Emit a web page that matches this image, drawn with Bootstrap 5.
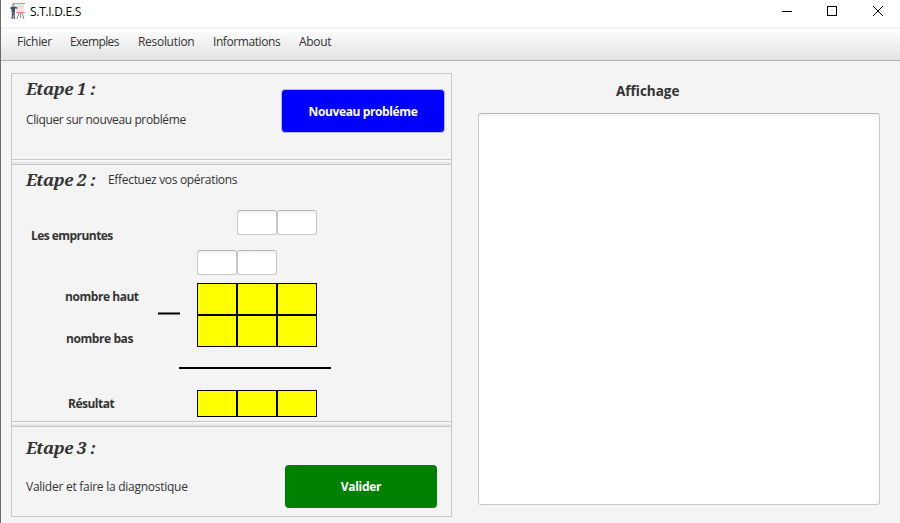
<!DOCTYPE html>
<html lang="fr">
<head>
<meta charset="utf-8">
<title>S.T.I.D.E.S</title>
<link href="https://cdn.jsdelivr.net/npm/bootstrap@5.3.0/dist/css/bootstrap.min.css" rel="stylesheet">
<style>
body{width:900px;height:523px;background:#f4f4f4;color:#333;font:12px/16px "Open Sans","Noto Sans",sans-serif;border-left:1px solid #6b6b6b}
.titlebar{height:27px;background:#fff;color:#000}
.app-icon{width:16px;height:20px;margin-left:8px}
.title-text{font-size:12px;letter-spacing:-.3px;margin-left:5px;line-height:24px;height:24px}
.winbtns{width:138px;height:24px}
.winbtns svg{width:46px;height:24px}
.menubar{height:34px;border-top:2px solid #f4f4f4;border-bottom:1px solid #b1b1b1;background:linear-gradient(#fdfdfd,#e3e3e3);padding:3px 0 0 16px;gap:18px}
.menubar a{color:#333;text-decoration:none;line-height:20px;height:20px;letter-spacing:-.3px}
.menubar .m1{width:35px;letter-spacing:-.3px}.menubar .m2{width:50px;letter-spacing:-.6px}.m3{width:57px}.menubar .m4{width:68px;letter-spacing:-.42px}
.workspace{padding:12px 20px 0 10px;gap:26px}
.steps{width:441px;height:444px;border:1px solid #c8c8c8}
.divider{height:6px;border:solid #c8c8c8;border-width:1px 0;background:linear-gradient(#fcfcfc,#dedede)}
.step1{height:85px;padding:5px 6px 0 14px}
.step2{height:256px}
.step2-head{height:30px;padding:5px 0 0 14px}
.step3{height:90px;padding:0 14px}
.step3-text{padding-top:11px}
h2.step-title{font:italic bold 17px/20px "Noto Serif","DejaVu Serif Condensed","DejaVu Serif",serif;letter-spacing:-.4px;width:82px;white-space:nowrap;margin:0;color:#333}
.t{white-space:nowrap}
.t1{letter-spacing:-.38px;padding-top:13px}
.t2{letter-spacing:-.32px;padding-top:2px}
.t3{letter-spacing:-.26px;padding-top:21px}
.cmd{border-radius:4px;color:#fff;font-weight:700;font-size:12px;padding:0;letter-spacing:-.38px}
.cmd-new{width:164px;height:44px;background:#00f;border:1px solid #b4b4f4;margin-top:10px;padding-top:2px}
.cmd-ok{width:152px;height:43px;background:#008000;border:0;margin-top:38px;letter-spacing:-.28px}
.labels{width:146px}
.lb-borrow{padding:33px 0 0 19px;letter-spacing:-.55px}
.lb-top{padding:45px 0 0 53px;letter-spacing:-.45px}
.lb-bottom{padding:26px 0 0 54px;letter-spacing:-.42px}
.lb-result{padding:49px 0 0 56px;letter-spacing:-.5px}
.ops{margin-left:17px;width:134px}
.borrow-high{padding:15px 0 0 40px}
.borrow-low{padding:15px 0 8px}
.minus{width:22px;height:3px;border:solid #797979;border-width:1px 0;background:#000;margin-top:117px}
.cellbox{width:40px;height:32px;background:#ff0;border:1px solid #000}
.res .cellbox{height:27px}
.borrow{width:40px;height:25px;border:1px solid #c8c8c8;border-top-color:#b5b5b5;border-radius:3px;background:linear-gradient(#f2f2f2,#fff 5px);padding:0}
.rule{width:152px;height:2px;background:#000;margin:20px 0 21px -18px}
.show-title{font-weight:700;font-size:13.5px;line-height:18px;height:31px;padding:9px 0 0 138px}
.display-area{width:402px;height:392px;border:1px solid #c8c8c8;border-top-color:#b5b5b5;border-radius:3px;background:linear-gradient(#f2f2f2,#fff 5px);resize:none;display:block;margin-top:9px}
</style>
<script src="https://cdn.jsdelivr.net/npm/bootstrap@5.3.0/dist/js/bootstrap.bundle.min.js"></script>
</head>
<body class="overflow-hidden">
<header class="titlebar d-flex">
  <svg class="app-icon" viewBox="0 0 16 20">
    <path d="M7 4h8v8H7z" fill="#eee4e1"/><path d="M5.500 3.500H16M7 12.500h9" stroke="#dc9086" fill="none"/>
    <path d="M10 13l-2 6M11.500 13v5M13 13l2 6" stroke="#8a8a8a" fill="none"/>
    <circle cx="4.300" cy="4.500" r="1.500" fill="#c0a088"/>
    <path d="M2.500 6.500h3.500l2.500 1v1.300l-2.500-.3V12H2.500V9.500L1 8z" fill="#3f5569"/>
    <path d="M2.800 12h3l.2 7H4.700l-.4-5-.5 5H2.500z" fill="#59636b"/>
  </svg>
  <div class="title-text">S.T.I.D.E.S</div>
  <div class="winbtns d-flex ms-auto">
    <svg viewBox="0 0 46 24"><path d="M20 11.500h10" stroke="#000" shape-rendering="crispEdges"/></svg>
    <svg viewBox="0 0 46 24"><path d="M19.500 6.500h9v9h-9z" stroke="#000" fill="none" shape-rendering="crispEdges"/></svg>
    <svg viewBox="0 0 46 24"><path d="M19 6l10 10M29 6L19 16" stroke="#000"/></svg>
  </div>
</header>
<nav class="menubar d-flex">
  <a class="m1" href="#">Fichier</a><a class="m2" href="#">Exemples</a><a class="m3" href="#">Resolution</a><a class="m4" href="#">Informations</a><a href="#">About</a>
</nav>
<main class="workspace d-flex">
  <div class="steps">
    <section class="step1 d-flex justify-content-between">
      <div><h2 class="step-title">Etape 1 :</h2><div class="t t1">Cliquer sur nouveau probléme</div></div>
      <button class="btn cmd cmd-new">Nouveau probléme</button>
    </section>
    <div class="divider"></div>
    <section class="step2">
      <div class="step2-head d-flex"><h2 class="step-title">Etape 2 :</h2><span class="t t2">Effectuez vos opérations</span></div>
      <div class="d-flex fw-bold">
        <div class="labels">
          <div class="t lb-borrow">Les empruntes</div>
          <div class="t lb-top">nombre haut</div>
          <div class="t lb-bottom">nombre bas</div>
          <div class="t lb-result">Résultat</div>
        </div>
        <div class="minus"></div>
        <div class="ops">
          <div class="d-flex borrow-high"><input class="borrow"><input class="borrow"></div>
          <div class="d-flex borrow-low"><input class="borrow"><input class="borrow"></div>
          <div class="d-flex"><div class="cellbox"></div><div class="cellbox"></div><div class="cellbox"></div></div>
          <div class="d-flex"><div class="cellbox"></div><div class="cellbox"></div><div class="cellbox"></div></div>
          <div class="rule"></div>
          <div class="d-flex res"><div class="cellbox"></div><div class="cellbox"></div><div class="cellbox"></div></div>
        </div>
      </div>
    </section>
    <div class="divider"></div>
    <section class="step3 d-flex justify-content-between">
      <div class="step3-text"><h2 class="step-title">Etape 3 :</h2><div class="t t3">Valider et faire la diagnostique</div></div>
      <button class="btn cmd cmd-ok">Valider</button>
    </section>
  </div>
  <section>
    <div class="show-title">Affichage</div>
    <textarea class="display-area"></textarea>
  </section>
</main>
</body>
</html>
